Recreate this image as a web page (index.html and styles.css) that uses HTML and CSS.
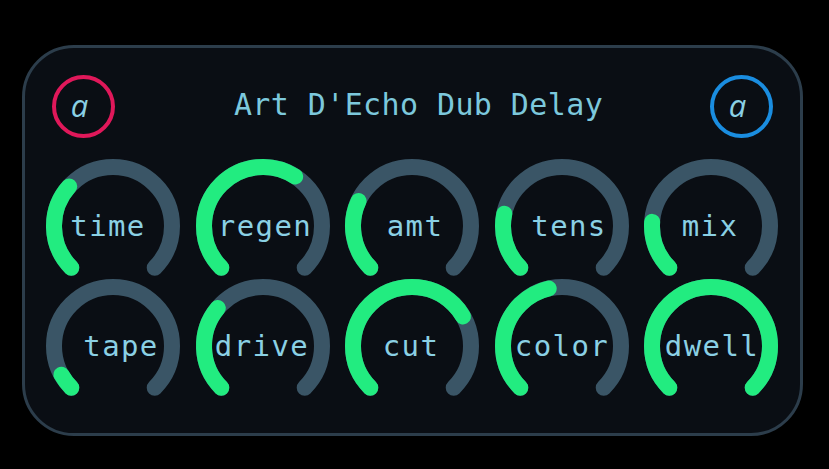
FILE: index.html
```html
<!DOCTYPE html>
<html>
<head>
<meta charset="utf-8">
<link rel="stylesheet" href="styles.css">
</head>
<body>
<div class="panel">
  <div class="header">
    <div class="badge badge-red">a</div>
    <div class="title">Art D'Echo Dub Delay</div>
    <div class="badge badge-blue">a</div>
  </div>
  <div class="knobs">
    <div class="knob"><svg viewBox="0 0 150 120" width="150" height="120"><path class="track" d="M33.28 101.72 A59 59 0 1 1 116.72 101.72"/><path class="value" pathLength="270" stroke-dasharray="87 1000" d="M33.28 101.72 A59 59 0 1 1 116.72 101.72"/><text class="label" x="75" y="69.5" dx="-5">time</text></svg></div>
    <div class="knob"><svg viewBox="0 0 150 120" width="150" height="120"><path class="track" d="M33.28 101.72 A59 59 0 1 1 116.72 101.72"/><path class="value" pathLength="270" stroke-dasharray="168 1000" d="M33.28 101.72 A59 59 0 1 1 116.72 101.72"/><text class="label" x="75" y="69.5" dx="2">regen</text></svg></div>
    <div class="knob"><svg viewBox="0 0 150 120" width="150" height="120"><path class="track" d="M33.28 101.72 A59 59 0 1 1 116.72 101.72"/><path class="value" pathLength="270" stroke-dasharray="70 1000" d="M33.28 101.72 A59 59 0 1 1 116.72 101.72"/><text class="label" x="75" y="69.5" dx="3">amt</text></svg></div>
    <div class="knob"><svg viewBox="0 0 150 120" width="150" height="120"><path class="track" d="M33.28 101.72 A59 59 0 1 1 116.72 101.72"/><path class="value" pathLength="270" stroke-dasharray="57 1000" d="M33.28 101.72 A59 59 0 1 1 116.72 101.72"/><text class="label" x="75" y="69.5" dx="7">tens</text></svg></div>
    <div class="knob"><svg viewBox="0 0 150 120" width="150" height="120"><path class="track" d="M33.28 101.72 A59 59 0 1 1 116.72 101.72"/><path class="value" pathLength="270" stroke-dasharray="49 1000" d="M33.28 101.72 A59 59 0 1 1 116.72 101.72"/><text class="label" x="75" y="69.5" dx="-1">mix</text></svg></div>
    <div class="knob"><svg viewBox="0 0 150 120" width="150" height="120"><path class="track" d="M33.28 101.72 A59 59 0 1 1 116.72 101.72"/><path class="value" pathLength="270" stroke-dasharray="16 1000" d="M33.28 101.72 A59 59 0 1 1 116.72 101.72"/><text class="label" x="75" y="69.5" dx="8">tape</text></svg></div>
    <div class="knob"><svg viewBox="0 0 150 120" width="150" height="120"><path class="track" d="M33.28 101.72 A59 59 0 1 1 116.72 101.72"/><path class="value" pathLength="270" stroke-dasharray="85 1000" d="M33.28 101.72 A59 59 0 1 1 116.72 101.72"/><text class="label" x="75" y="69.5" dx="-1">drive</text></svg></div>
    <div class="knob"><svg viewBox="0 0 150 120" width="150" height="120"><path class="track" d="M33.28 101.72 A59 59 0 1 1 116.72 101.72"/><path class="value" pathLength="270" stroke-dasharray="195 1000" d="M33.28 101.72 A59 59 0 1 1 116.72 101.72"/><text class="label" x="75" y="69.5" dx="-1">cut</text></svg></div>
    <div class="knob"><svg viewBox="0 0 150 120" width="150" height="120"><path class="track" d="M33.28 101.72 A59 59 0 1 1 116.72 101.72"/><path class="value" pathLength="270" stroke-dasharray="122 1000" d="M33.28 101.72 A59 59 0 1 1 116.72 101.72"/><text class="label" x="75" y="69.5" dx="0">color</text></svg></div>
    <div class="knob"><svg viewBox="0 0 150 120" width="150" height="120"><path class="track" d="M33.28 101.72 A59 59 0 1 1 116.72 101.72"/><path class="value" pathLength="270" stroke-dasharray="270 1000" d="M33.28 101.72 A59 59 0 1 1 116.72 101.72"/><text class="label" x="75" y="69.5" dx="1">dwell</text></svg></div>
  </div>
</div>
</body>
</html>
```
FILE: styles.css
```css
html, body {
  margin: 0;
  padding: 0;
  background: #000;
}
body {
  width: 829px;
  height: 469px;
  overflow: hidden;
}
.panel {
  box-sizing: border-box;
  margin: 45px 0 0 22px;
  width: 781px;
  height: 391px;
  border: 3px solid #2c3d4b;
  border-radius: 52px;
  background: #0a0e14;
  display: flex;
  flex-direction: column;
  padding: 27px 0 0 0;
}
.header {
  display: flex;
  align-items: center;
  justify-content: space-between;
  padding: 0 27px;
  height: 63px;
}
.badge {
  box-sizing: border-box;
  width: 63px;
  height: 63px;
  border-radius: 50%;
  border: 4px solid #e0185a;
  display: flex;
  align-items: center;
  justify-content: center;
  font-family: "Open Sans", sans-serif;
  font-style: italic;
  font-size: 31px;
  color: #8ad0e4;
  padding: 0 8px 4px 0;
}
.badge-blue {
  border-color: #1a8de0;
}
.title {
  font-family: "DejaVu Sans Mono", monospace;
  font-size: 30px;
  letter-spacing: 0.4px;
  color: #7cc8dc;
  padding: 0 0 4px 12px;
}
.knobs {
  display: grid;
  grid-template-columns: repeat(5, 149.6px);
  grid-template-rows: repeat(2, 120px);
  padding: 27.6px 13px 0 13px;
}
.knob svg {
  display: block;
  overflow: visible;
}
.track, .value {
  fill: none;
  stroke-width: 16;
  stroke-linecap: round;
}
.track {
  stroke: #3a5566;
}
.value {
  stroke: #22ec80;
}
.label {
  font-family: "DejaVu Sans Mono", monospace;
  font-size: 29px;
  letter-spacing: 1.4px;
  fill: #8ad0e4;
  text-anchor: middle;
}
```
